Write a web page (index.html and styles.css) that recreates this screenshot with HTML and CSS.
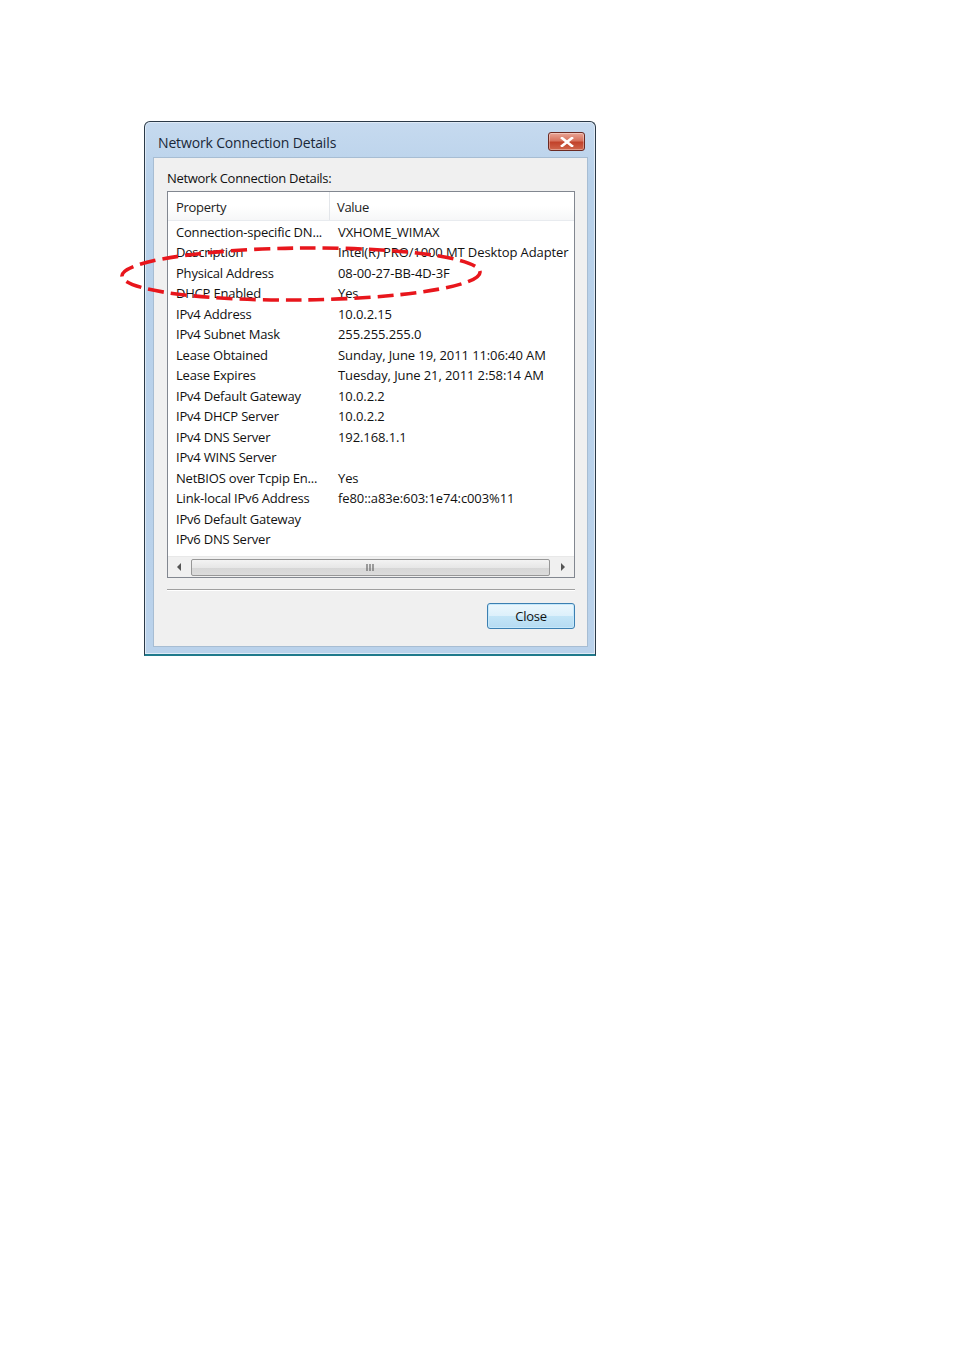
FILE: index.html
```html
<!DOCTYPE html>
<html>
<head>
<meta charset="utf-8">
<link rel="stylesheet" href="styles.css">
</head>
<body>
<div class="page">
  <div class="window">
    <div class="titlebar">
      <span class="title">Network Connection Details</span>
      <div class="xbtn"><svg width="14" height="10" viewBox="0 0 14 10"><path d="M2 1 L12 9 M12 1 L2 9" stroke="#fff" stroke-width="2.6" stroke-linecap="square"/></svg></div>
    </div>
    <div class="client">
      <div class="label">Network Connection Details:</div>
      <div class="listview">
        <div class="header">
          <div class="hcol c1">Property</div>
          <div class="hcol c2">Value</div>
        </div>
        <div class="rows">
          <div class="row"><span class="c1">Connection-specific DN...</span><span class="c2">VXHOME_WIMAX</span></div>
          <div class="row"><span class="c1">Description</span><span class="c2">Intel(R) PRO/1000 MT Desktop Adapter</span></div>
          <div class="row"><span class="c1">Physical Address</span><span class="c2">08-00-27-BB-4D-3F</span></div>
          <div class="row"><span class="c1">DHCP Enabled</span><span class="c2">Yes</span></div>
          <div class="row"><span class="c1">IPv4 Address</span><span class="c2">10.0.2.15</span></div>
          <div class="row"><span class="c1">IPv4 Subnet Mask</span><span class="c2">255.255.255.0</span></div>
          <div class="row"><span class="c1">Lease Obtained</span><span class="c2">Sunday, June 19, 2011 11:06:40 AM</span></div>
          <div class="row"><span class="c1">Lease Expires</span><span class="c2">Tuesday, June 21, 2011 2:58:14 AM</span></div>
          <div class="row"><span class="c1">IPv4 Default Gateway</span><span class="c2">10.0.2.2</span></div>
          <div class="row"><span class="c1">IPv4 DHCP Server</span><span class="c2">10.0.2.2</span></div>
          <div class="row"><span class="c1">IPv4 DNS Server</span><span class="c2">192.168.1.1</span></div>
          <div class="row"><span class="c1">IPv4 WINS Server</span><span class="c2"></span></div>
          <div class="row"><span class="c1">NetBIOS over Tcpip En...</span><span class="c2">Yes</span></div>
          <div class="row"><span class="c1">Link-local IPv6 Address</span><span class="c2">fe80::a83e:603:1e74:c003%11</span></div>
          <div class="row"><span class="c1">IPv6 Default Gateway</span><span class="c2"></span></div>
          <div class="row"><span class="c1">IPv6 DNS Server</span><span class="c2"></span></div>
        </div>
        <div class="hscroll">
          <div class="arrow"><svg width="6" height="8" viewBox="0 0 6 8"><path d="M5 0 L5 8 L1 4 Z" fill="#555"/></svg></div>
          <div class="thumb"><svg width="9" height="7" viewBox="0 0 9 7"><path d="M1 0V7M4 0V7M7 0V7" stroke="#666" stroke-width="1.2"/></svg></div>
          <div class="arrow"><svg width="6" height="8" viewBox="0 0 6 8"><path d="M1 0 L1 8 L5 4 Z" fill="#555"/></svg></div>
        </div>
      </div>
      <div class="sep"></div>
      <div class="buttons"><button class="btn">Close</button></div>
    </div>
  </div>
  <svg class="ellipse" width="380" height="70" viewBox="0 0 380 70">
    <ellipse cx="181" cy="34" rx="179" ry="26" fill="none" stroke="#e8161c" stroke-width="3.6" stroke-dasharray="16 7" transform="rotate(-0.6 181 34)"/>
  </svg>
</div>
</body>
</html>
```
FILE: styles.css
```css
html, body { margin: 0; padding: 0; background: #fff; }
body { font-family: "Open Sans", "Liberation Sans", sans-serif; }
.page { position: relative; width: 954px; height: 1350px; padding: 121px 0 0 144px; box-sizing: border-box; }
.window {
  width: 452px; height: 535px; box-sizing: border-box;
  border: 1px solid #2b3a48; border-bottom: 2px solid #1f7a8c;
  border-radius: 6px 6px 0 0;
  background: linear-gradient(#c6daef, #b8d1ea 60px, #bad2eb);
  padding: 0 7px 7px 8px;
  display: flex; flex-direction: column;
  box-shadow: inset 0 0 0 1px #dfeaf6;
}
.titlebar { height: 35px; display: flex; align-items: center; justify-content: space-between; flex: none; }
.title { font-size: 14px; color: #1a2838; padding-left: 5px; padding-top: 6px; letter-spacing: -0.15px; }
.xbtn {
  width: 37px; height: 19px; margin-top: 4px; margin-right: 3px; box-sizing: border-box;
  border: 1px solid #6b2a22; border-radius: 3px;
  background: linear-gradient(#e9a596, #d7735e 45%, #c2432b 55%, #d0664c);
  display: flex; align-items: center; justify-content: center;
  box-shadow: inset 0 0 0 1px rgba(255,255,255,0.35);
}
.client {
  flex: 1; background: #f0f0f0; border: 1px solid #a7bdd3;
  padding: 0 12px 0 13px; display: flex; flex-direction: column;
}
.label { font-size: 13px; color: #111; height: 33px; line-height: 41px; letter-spacing: -0.3px; }
.listview {
  height: 387px; box-sizing: border-box; border: 1px solid #828790; background: #fff;
  display: flex; flex-direction: column;
}
.header { height: 28px; display: flex; border-bottom: 1px solid #e8ebef; background: linear-gradient(#fff, #fff 50%, #f6f7f8); flex: none; }
.hcol { font-size: 13px; color: #222; line-height: 30px; padding-left: 8px; box-sizing: border-box; letter-spacing: -0.3px; }
.hcol.c1 { width: 162px; border-right: 1px solid #e3e6ea; }
.hcol.c2 { padding-left: 7px; }
.rows { flex: 1; padding-top: 1px; }
.row { height: 20.47px; display: flex; font-size: 13px; line-height: 20.47px; color: #111; white-space: nowrap; }
.row .c1 { width: 161px; padding-left: 8px; box-sizing: border-box; flex: none; letter-spacing: -0.2px; }
.row .c2 { padding-left: 9px; letter-spacing: -0.1px; }
.hscroll { height: 20px; margin-bottom: 0; display: flex; align-items: center; background: #f0f0f0; flex: none; border-top: 1px solid #e8e8e8; }
.arrow { width: 22px; height: 19px; display: flex; align-items: center; justify-content: center; flex: none; }
.thumb {
  flex: 1; height: 17px; box-sizing: border-box; border: 1px solid #979797; border-radius: 2px;
  background: linear-gradient(#f3f3f3, #e7e7e7 50%, #d6d6d6 51%, #dcdcdc);
  display: flex; align-items: center; justify-content: center; margin: 0 2px 0 1px;
}
.sep { height: 1px; background: #a0a0a0; border-bottom: 1px solid #fff; margin-top: 11px; }
.buttons { display: flex; justify-content: flex-end; margin-top: 12px; }
.btn {
  width: 88px; height: 26px; box-sizing: border-box; border: 1px solid #3c7fb1; border-radius: 3px;
  background: linear-gradient(#ecf7fd, #dcf0fb 50%, #c3e5f7 51%, #b6dbf2);
  box-shadow: inset 0 0 0 1px #c5e8fb;
  font-family: "Open Sans", "Liberation Sans", sans-serif; font-size: 13px; color: #111; letter-spacing: -0.3px; padding: 0;
}
.ellipse { position: absolute; left: 120px; top: 240px; }
```
